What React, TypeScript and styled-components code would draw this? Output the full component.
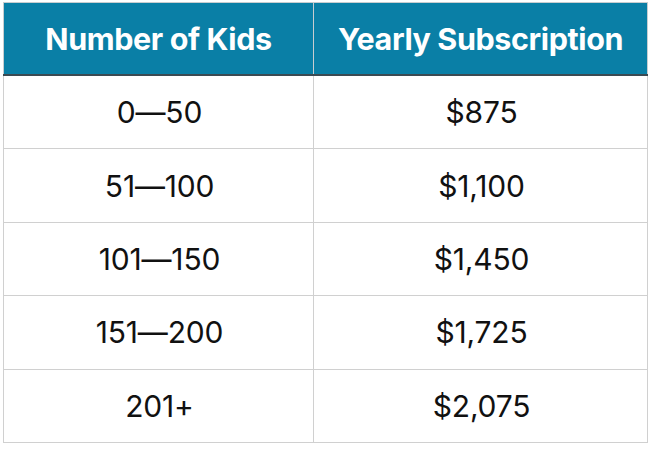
import React from 'react';
import styled, { createGlobalStyle } from 'styled-components';

const GlobalStyle = createGlobalStyle`
  html, body {
    margin: 0;
    padding: 0;
    background: #ffffff;
  }
`;

const Page = styled.div`
  padding: 2px 5px 0 3px;
  font-family: 'Inter', 'Lato', sans-serif;
`;

const Table = styled.table`
  width: 642px;
  border-collapse: collapse;
  table-layout: fixed;
`;

const HeadCell = styled.th<{ $w: number }>`
  width: ${(p) => p.$w}px;
  height: 71px;
  padding: 0;
  background-color: #0a7fa6;
  color: #ffffff;
  font-size: 30.5px;
  font-weight: 700;
  letter-spacing: -0.4px;
  text-align: center;
  border: 1px solid #c8cdd0;
  border-bottom: 2px solid #3b4a52;
  & + & {
    border-left: 1px solid #4f9fbd;
  }
`;

const Cell = styled.td`
  height: 72.4px;
  padding: 0 0 0 2px;
  color: #111111;
  font-size: 30px;
  font-weight: 400;
  letter-spacing: -0.2px;
  text-align: center;
  border: 1px solid #d0d0d0;
`;

const rows = [
  ['0\u201450', '$875'],
  ['51\u2014100', '$1,100'],
  ['101\u2014150', '$1,450'],
  ['151\u2014200', '$1,725'],
  ['201+', '$2,075'],
];

const App: React.FC = () => {
  return (
    <>
      <GlobalStyle />
      <Page>
        <Table>
          <thead>
            <tr>
              <HeadCell $w={309}>Number of Kids</HeadCell>
              <HeadCell $w={333}>Yearly Subscription</HeadCell>
            </tr>
          </thead>
          <tbody>
            {rows.map(([kids, price]) => (
              <tr key={kids}>
                <Cell>{kids}</Cell>
                <Cell>{price}</Cell>
              </tr>
            ))}
          </tbody>
        </Table>
      </Page>
    </>
  );
};

export default App;
